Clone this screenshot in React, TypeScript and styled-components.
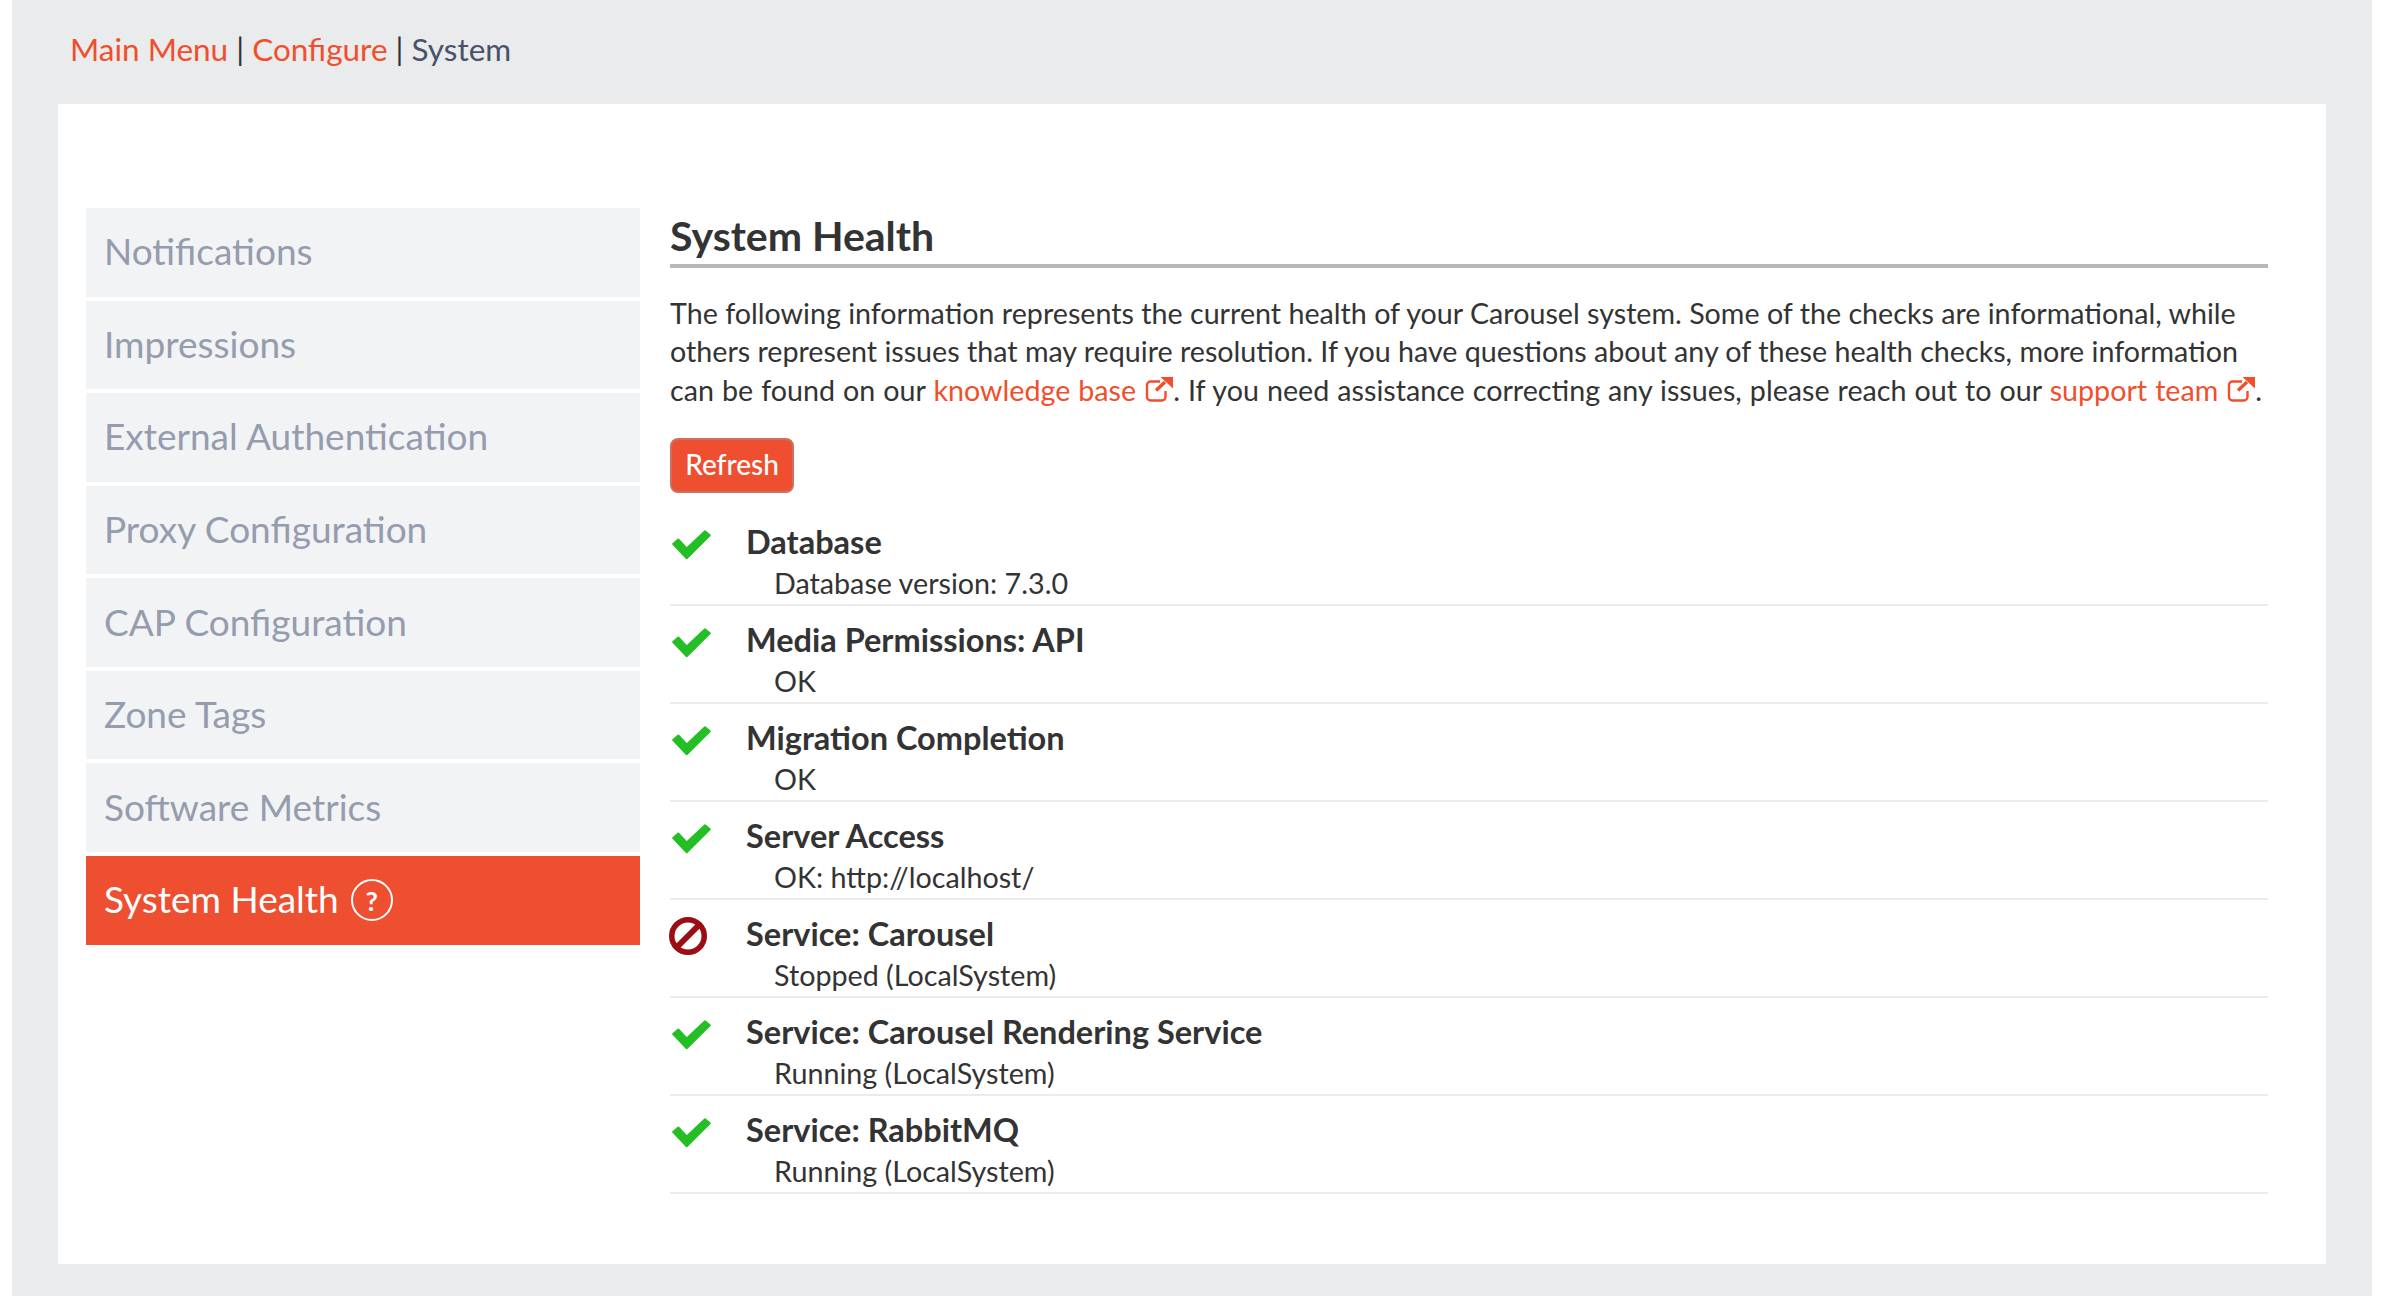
import React from "react";
import styled, { createGlobalStyle } from "styled-components";

const Global = createGlobalStyle`
  html, body { margin: 0; padding: 0; background: #ffffff; }
  body { font-family: Lato, "Noto Sans", "Liberation Sans", sans-serif; color: #333333; }
  * { box-sizing: border-box; }
`;

const Frame = styled.div`
  width: 2360px;
  height: 1296px;
  margin-left: 12px;
  padding: 0 46px;
  background: #eaebed;
  overflow: hidden;
`;

const Breadcrumb = styled.nav`
  height: 104px;
  display: flex;
  align-items: center;
  padding: 0 0 6px 12px;
  font-size: 31.5px;
  color: #333333;
  white-space: pre;
`;

const Crumb = styled.a`
  color: #f04f2c;
`;

const Current = styled.span`
  color: #4a5168;
`;

const Card = styled.main`
  height: 1160px;
  background: #ffffff;
  padding: 104px 58px 0 28px;
  display: grid;
  grid-template-columns: 554px 1598px;
  column-gap: 30px;
  align-items: start;
`;

const SideNav = styled.ul`
  list-style: none;
  margin: 0;
  padding: 0;
  display: grid;
  grid-auto-rows: 88.57px;
  row-gap: 4px;
`;

const SideItem = styled.li<{ $active?: boolean }>`
  display: flex;
  align-items: center;
  gap: 12px;
  padding: 0 0 3px 18px;
  font-size: 37px;
  background: ${(p) => (p.$active ? "#ee4f30" : "#f2f3f5")};
  color: ${(p) => (p.$active ? "#ffffff" : "#959cae")};
`;

const HelpBadge = styled.span`
  width: 42px;
  height: 42px;
  margin-top: 3px;
  border: 2px solid #ffffff;
  border-radius: 50%;
  display: flex;
  align-items: center;
  justify-content: center;
  font-size: 27px;
  font-weight: 700;
`;

const Content = styled.section`
  display: flex;
  flex-direction: column;
`;

const Title = styled.h1`
  margin: 0;
  height: 60px;
  border-bottom: 4px solid #b8b8b8;
  font-size: 41px;
  line-height: 56px;
  font-weight: 700;
  color: #333333;
`;

const Intro = styled.p`
  margin: 26px 0 0;
  font-size: 28.66px;
  line-height: 38.3px;
  color: #333333;
`;

const IntroLine = styled.span<{ $spread?: boolean }>`
  display: block;
  white-space: nowrap;
  word-spacing: ${(p) => (p.$spread ? "0.7px" : "0")};
`;

const Link = styled.a`
  color: #f04f2c;
`;

const ExtIcon = styled.svg`
  width: 28px;
  height: 25px;
  margin-left: 9px;
  vertical-align: -1px;
`;

const RefreshButton = styled.button`
  width: 124px;
  height: 55px;
  margin-top: 29px;
  padding: 0 0 3px;
  background: #ee4f30;
  border: 2px solid #cc7060;
  border-radius: 8px;
  color: #ffffff;
  font: 500 28px Lato, sans-serif;
`;

const Rows = styled.div`
  margin-top: 15px;
  display: flex;
  flex-direction: column;
`;

const Row = styled.div`
  height: 98px;
  border-bottom: 2px solid #ebebeb;
  display: grid;
  grid-template-columns: 79px 1fr;
  align-content: start;
  padding-top: 15px;
`;

const StatusCell = styled.div<{ $ok: boolean }>`
  grid-row: span 2;
  padding: ${(p) => (p.$ok ? "7px 0 0 2px" : "2px 0 0 0")};
  margin-left: ${(p) => (p.$ok ? "0" : "-1px")};
  line-height: 0;
  color: ${(p) => (p.$ok ? "#23bf25" : "#9c0c12")};
`;

const CheckSvg = styled.svg`
  width: 39px;
  height: 30px;
`;

const BanSvg = styled.svg`
  width: 38px;
  height: 38px;
`;

const RowTitle = styled.div`
  margin-left: -3px;
  font-size: 32.5px;
  line-height: 38px;
  font-weight: 700;
  color: #333333;
`;

const RowDetail = styled.div`
  margin: 3px 0 0 25px;
  font-size: 28.7px;
  line-height: 38px;
  color: #333333;
`;

const External = () => (
  <ExtIcon viewBox="0 0 28 25" aria-hidden="true">
    <path
      d="M15 4.5H5.5A3.5 3.5 0 0 0 2 8v12a3.5 3.5 0 0 0 3.5 3.5H17a3.5 3.5 0 0 0 3.5-3.5v-6"
      fill="none"
      stroke="#f04f2c"
      strokeWidth="2.4"
    />
    <path d="M11 13.5 20 5" fill="none" stroke="#f04f2c" strokeWidth="3.4" />
    <path d="M15.5 0H28v11.5z" fill="#f04f2c" />
  </ExtIcon>
);

const Check = () => (
  <CheckSvg viewBox="0 0 39 30" aria-hidden="true">
    <path
      d="M1.2 14 6.3 9.5 14.7 18.5 33 1.2 37.8 5.2 14.7 28.2z"
      fill="currentColor"
      stroke="currentColor"
      strokeWidth="2"
      strokeLinejoin="round"
    />
  </CheckSvg>
);

const Ban = () => (
  <BanSvg viewBox="0 0 38 38" aria-hidden="true">
    <circle cx="19" cy="19" r="16.25" fill="none" stroke="currentColor" strokeWidth="5.5" />
    <path d="M8 30 30 8" fill="none" stroke="currentColor" strokeWidth="6" />
  </BanSvg>
);

const nav = [
  "Notifications",
  "Impressions",
  "External Authentication",
  "Proxy Configuration",
  "CAP Configuration",
  "Zone Tags",
  "Software Metrics",
];

const checks: { title: string; detail: string; ok: boolean }[] = [
  { title: "Database", detail: "Database version: 7.3.0", ok: true },
  { title: "Media Permissions: API", detail: "OK", ok: true },
  { title: "Migration Completion", detail: "OK", ok: true },
  { title: "Server Access", detail: "OK: http://localhost/", ok: true },
  { title: "Service: Carousel", detail: "Stopped (LocalSystem)", ok: false },
  { title: "Service: Carousel Rendering Service", detail: "Running (LocalSystem)", ok: true },
  { title: "Service: RabbitMQ", detail: "Running (LocalSystem)", ok: true },
];

export default function App() {
  return (
    <>
      <Global />
      <Frame>
        <Breadcrumb>
          <Crumb>Main Menu</Crumb> | <Crumb>Configure</Crumb> | <Current>System</Current>
        </Breadcrumb>
        <Card>
          <SideNav>
            {nav.map((n) => (
              <SideItem key={n}>{n}</SideItem>
            ))}
            <SideItem $active>
              System Health <HelpBadge>?</HelpBadge>
            </SideItem>
          </SideNav>
          <Content>
            <Title>System Health</Title>
            <Intro>
              <IntroLine>
                The following information represents the current health of your Carousel system. Some of the checks are
                informational, while
              </IntroLine>
              <IntroLine>
                others represent issues that may require resolution. If you have questions about any of these health
                checks, more information
              </IntroLine>
              <IntroLine $spread>
                can be found on our{" "}
                <Link>
                  knowledge base
                  <External />
                </Link>
                . If you need assistance correcting any issues, please reach out to our{" "}
                <Link>
                  support team
                  <External />
                </Link>
                .
              </IntroLine>
            </Intro>
            <div>
              <RefreshButton>Refresh</RefreshButton>
            </div>
            <Rows>
              {checks.map((c) => (
                <Row key={c.title}>
                  <StatusCell $ok={c.ok}>{c.ok ? <Check /> : <Ban />}</StatusCell>
                  <RowTitle>{c.title}</RowTitle>
                  <RowDetail>{c.detail}</RowDetail>
                </Row>
              ))}
            </Rows>
          </Content>
        </Card>
      </Frame>
    </>
  );
}
